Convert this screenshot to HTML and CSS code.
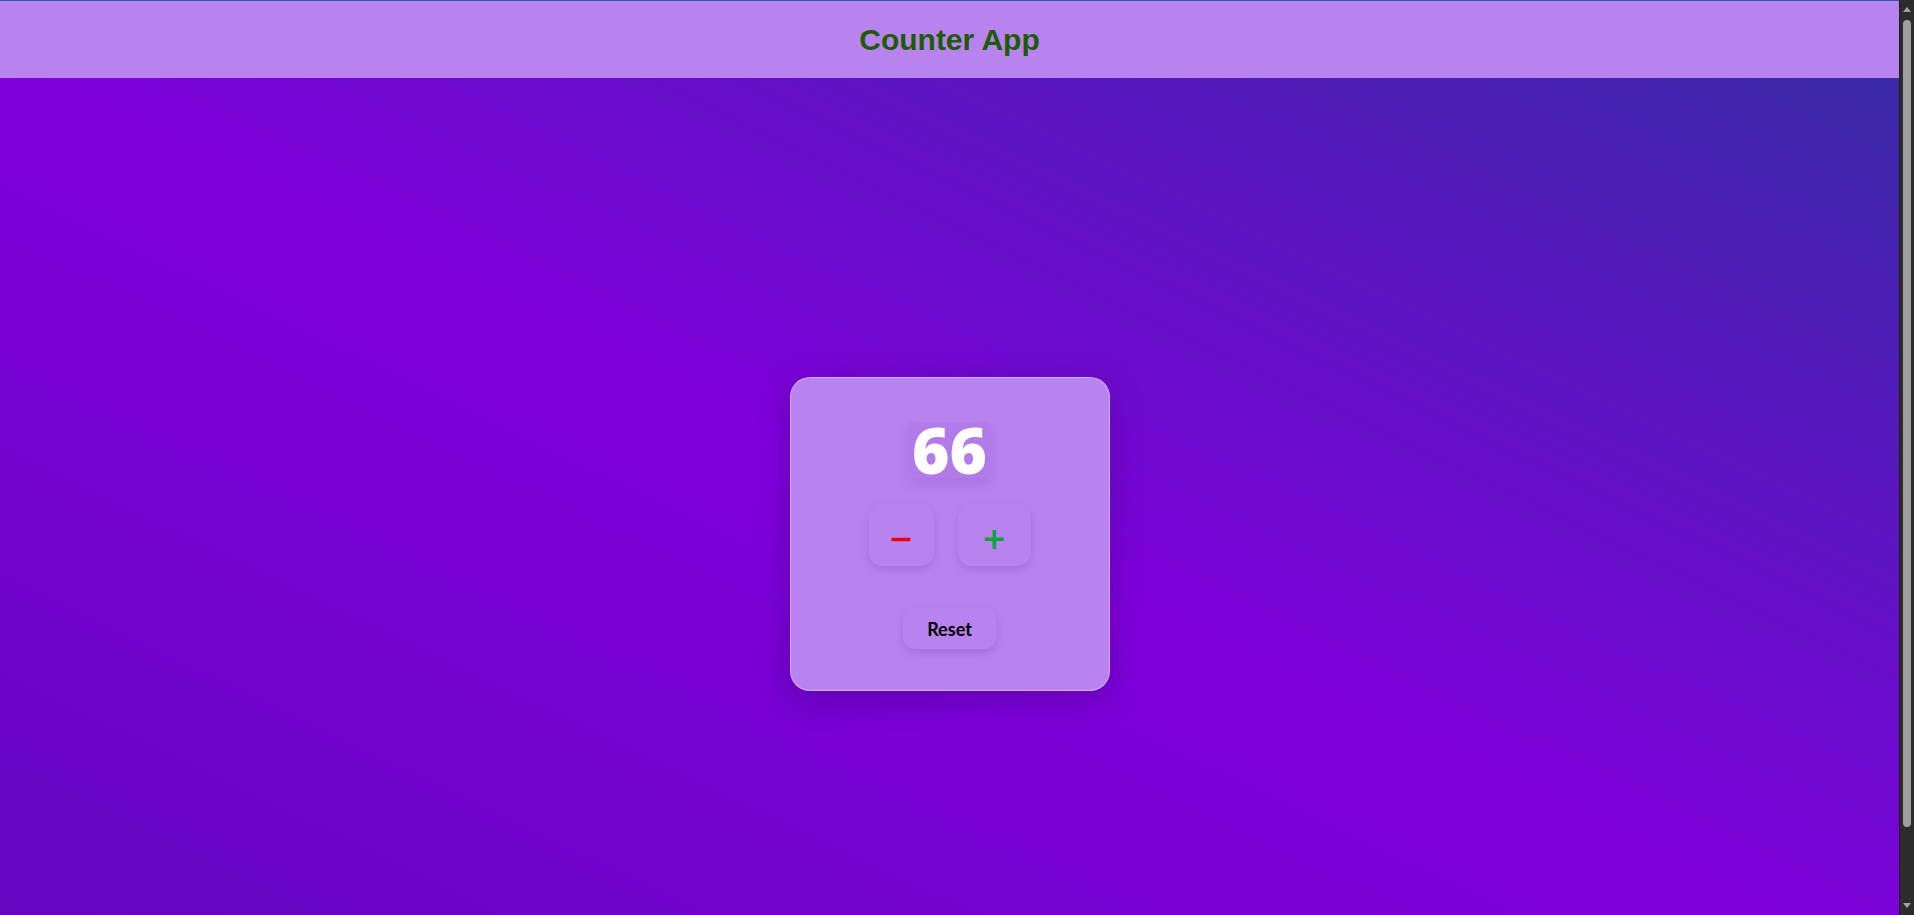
FILE: index.html
```html
<!DOCTYPE html>
<html lang="en">
<head>
<meta charset="utf-8">
<title>Counter App</title>
<link rel="stylesheet" href="styles.css">
</head>
<body>
<header class="app-header">
  <h1 class="app-title">Counter App</h1>
</header>
<main class="stage">
  <section class="card">
    <div class="count">66</div>
    <div class="controls">
      <button class="step-btn step-dec" type="button">&minus;</button>
      <button class="step-btn step-inc" type="button">+</button>
    </div>
    <button class="reset-btn" type="button">Reset</button>
  </section>
</main>
<div class="scrollbar" aria-hidden="true">
  <span class="sb-arrow sb-up"></span>
  <span class="sb-thumb"></span>
  <span class="sb-arrow sb-down"></span>
</div>
</body>
</html>
```

FILE: styles.css
```css
html {
  color-scheme: dark;
}

body {
  margin: 0;
  padding-right: 15px;
  background: #7d00d8;
  font-family: "Lato", "Open Sans", sans-serif;
}

.app-header {
  box-sizing: border-box;
  height: 78px;
  border-top: 1px solid #2a5ca8;
  background: #b983ef;
  display: flex;
  align-items: center;
  justify-content: center;
}

.app-title {
  margin: 0;
  font-family: "Liberation Sans", Arial, sans-serif;
  font-weight: 700;
  font-size: 30px;
  line-height: 1;
  color: #1c5c05;
  padding-top: 1px;
}

.stage {
  min-height: calc(100vh - 3px);
  display: flex;
  align-items: center;
  justify-content: center;
  background: linear-gradient(to top right, #6206be 0%, #8000dc 50%, #3a2aa8 100%);
}

.card {
  box-sizing: border-box;
  width: 320px;
  padding: 44px 40px 41px;
  background: #b983ef;
  border: 1px solid rgba(255, 255, 255, 0.35);
  border-radius: 20px;
  box-shadow: 0 8px 32px rgba(20, 0, 60, 0.25);
  display: flex;
  flex-direction: column;
  align-items: center;
}

.count {
  font-family: "Open Sans", "Noto Sans", sans-serif;
  font-weight: 800;
  font-size: 64px;
  line-height: 56px;
  height: 56px;
  padding: 0 3px;
  color: #ffffff;
  background: rgba(110, 30, 170, 0.07);
  box-shadow: 0 6px 12px rgba(60, 0, 110, 0.12);
  margin-bottom: 26px;
}

.controls {
  display: flex;
  gap: 24px;
  margin-bottom: 42px;
}

.step-btn {
  height: 62px;
  border: none;
  border-radius: 14px;
  background: #b983ef;
  box-shadow: 0 4px 8px rgba(60, 0, 110, 0.15);
  font-family: "DejaVu Sans", sans-serif;
  font-weight: 700;
  font-size: 30px;
  line-height: 1;
  padding: 8px 0 0;
  cursor: pointer;
}

.step-dec {
  width: 65px;
  color: #ee0012;
}

.step-inc {
  width: 73px;
  color: #00a63c;
}

.reset-btn {
  height: 41px;
  padding: 0 24px;
  border: none;
  border-radius: 12px;
  background: #b983ef;
  box-shadow: 0 4px 8px rgba(60, 0, 110, 0.15);
  font-family: "Lato", "Open Sans", sans-serif;
  font-weight: 700;
  font-size: 18px;
  color: #000000;
  cursor: pointer;
}

.scrollbar {
  position: fixed;
  top: 0;
  right: 0;
  bottom: 0;
  width: 15px;
  box-sizing: border-box;
  border-left: 1px solid #1e1e1e;
  background: #2c2c2c;
  display: flex;
  flex-direction: column;
  align-items: center;
}

.sb-arrow {
  width: 0;
  height: 0;
  border-left: 4px solid transparent;
  border-right: 4px solid transparent;
}

.sb-up {
  margin-top: 7px;
  border-bottom: 5px solid #a3a3a3;
}

.sb-thumb {
  width: 8px;
  margin-top: 8px;
  height: 807px;
  border-radius: 4px;
  background: #9e9e9e;
}

.sb-down {
  margin-top: auto;
  margin-bottom: 7px;
  border-top: 5px solid #a3a3a3;
}
```
